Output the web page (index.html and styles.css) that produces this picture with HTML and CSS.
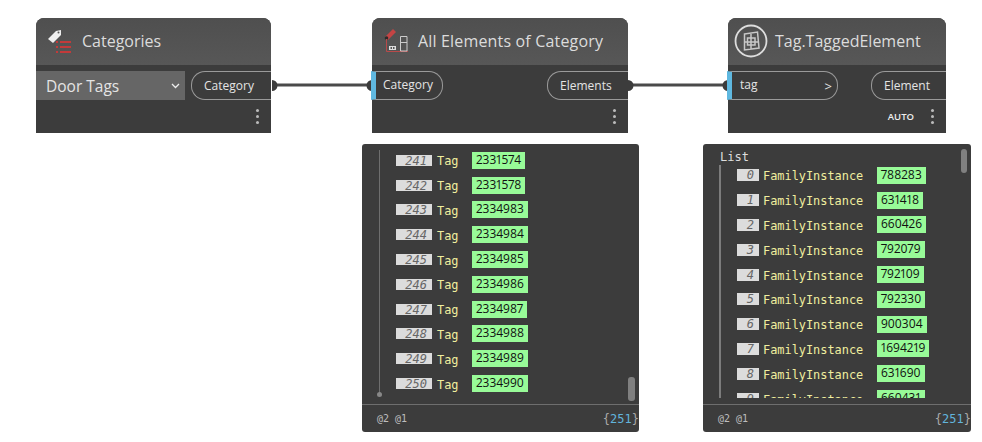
FILE: index.html
```html
<!DOCTYPE html>
<html lang="en">
<head>
    <meta charset="UTF-8">
    <title>Door Tags graph</title>
    <link rel="stylesheet" href="styles.css">
</head>
<body>
    <div class="canvas">
        <svg class="wires" width="982" height="442">
            <path d="M272 85H372M628 85H728" stroke="#4a4a4a" stroke-width="3" fill="none"/>
            <path d="M272 80a5 5 0 0 1 0 11zM372 80a5 5 0 0 0 0 11zM628 80a5 5 0 0 1 0 11zM728 80a5 5 0 0 0 0 11z" fill="#3c3c3c"/>
        </svg>

        <!-- Categories -->
        <div class="node node-categories">
            <div class="node-head">
                <svg class="node-icon" width="32" height="32" viewBox="0 0 32 32">
                    <path d="M2 14 10 6l5-1 0 5-8 8z" fill="#eee"/>
                    <circle cx="12.500" cy="7.500" r="1" fill="#555"/>
                    <path d="M10 16h2v2h-2zM10 21h2v2h-2zM10 26h2v2h-2z" fill="#c33a3a"/>
                    <path d="M14 16h11v2H14zM14 21h11v2H14zM14 26h11v2H14z" fill="#c33a3a"/>
                </svg>
                <span class="node-title">Categories</span>
            </div>
            <div class="node-ports">
                <div class="dropdown">
                    <span>Door Tags</span>
                    <svg width="9" height="6" viewBox="0 0 9 6"><path d="M1 1l3.500 3.500L8 1" stroke="#eee" stroke-width="1.300" fill="none"/></svg>
                </div>
                <div class="port port-out port-cat-out">Category</div>
            </div>
            <div class="node-foot"><span class="dots"></span></div>
        </div>

        <!-- All Elements of Category -->
        <div class="node node-elements">
            <div class="node-head">
                <svg class="node-icon" width="32" height="32" viewBox="0 0 32 32">
                    <path d="M2 12 10 4l3 3-8 8z" fill="#c44444"/>
                    <circle cx="3.500" cy="13" r="1.800" fill="#2c2c2c"/>
                    <path d="M3.500 14V26.500H25" stroke="#b84a4a" stroke-width="1" fill="none"/>
                    <path d="M6 21h7v4H6z" fill="#ddd"/>
                    <path d="M7.500 22h1.500v2H7.500zM10 22h1.500v2H10z" fill="#555"/>
                    <path d="M17.500 11.500h6.500v14.500h-6.500zM17.500 17.500h6.500" stroke="#ccc" stroke-width="1" fill="none"/>
                </svg>
                <span class="node-title">All Elements of Category</span>
            </div>
            <div class="node-ports between">
                <div class="port port-in port-cat-in"><span class="port-raised">Category</span></div>
                <div class="port port-out port-el-out">Elements</div>
            </div>
            <div class="node-foot"><span class="dots"></span></div>
        </div>

        <!-- Tag.TaggedElement -->
        <div class="node node-tagged">
            <div class="node-head">
                <svg class="node-icon" width="34" height="34" viewBox="0 0 34 34">
                    <circle cx="17" cy="17" r="15.500" fill="none" stroke="#ddd" stroke-width="1.800"/>
                    <path d="M10.500 10 23.500 8 25 24l-14.500 2zM10.500 18H24.500M17 9V25M13.500 14H21V21H13.500z" fill="none" stroke="#c8c8c8" stroke-width="1.500"/>
                </svg>
                <span class="node-title">Tag.TaggedElement</span>
            </div>
            <div class="node-ports between">
                <div class="port port-in port-tag-in"><span class="port-raised">tag</span><span class="more">&gt;</span></div>
                <div class="port port-out port-tag-out">Element</div>
            </div>
            <div class="node-foot"><span class="auto">AUTO</span><span class="dots"></span></div>
        </div>

        <!-- preview of All Elements -->
        <div class="preview preview-left">
            <div class="preview-body">
                <div class="tree-line tree-line-left"><i class="tree-end"></i></div>
                <div class="rows">
                    <div class="row"><span class="idx">241</span><span class="type">Tag</span><span class="val">2331574</span></div>
                    <div class="row"><span class="idx">242</span><span class="type">Tag</span><span class="val">2331578</span></div>
                    <div class="row"><span class="idx">243</span><span class="type">Tag</span><span class="val">2334983</span></div>
                    <div class="row"><span class="idx">244</span><span class="type">Tag</span><span class="val">2334984</span></div>
                    <div class="row"><span class="idx">245</span><span class="type">Tag</span><span class="val">2334985</span></div>
                    <div class="row"><span class="idx">246</span><span class="type">Tag</span><span class="val">2334986</span></div>
                    <div class="row"><span class="idx">247</span><span class="type">Tag</span><span class="val">2334987</span></div>
                    <div class="row"><span class="idx">248</span><span class="type">Tag</span><span class="val">2334988</span></div>
                    <div class="row"><span class="idx">249</span><span class="type">Tag</span><span class="val">2334989</span></div>
                    <div class="row"><span class="idx">250</span><span class="type">Tag</span><span class="val">2334990</span></div>
                </div>
                <div class="thumb thumb-bottom"></div>
            </div>
            <div class="preview-foot"><span class="levels">@2 @1</span><span class="count">{<b>251</b>}</span></div>
        </div>

        <!-- preview of Tag.TaggedElement -->
        <div class="preview preview-right">
            <div class="preview-body">
                <div class="list-label">List</div>
                <div class="tree-line tree-line-right"></div>
                <div class="rows">
                    <div class="row"><span class="idx">0</span><span class="type">FamilyInstance</span><span class="val">788283</span></div>
                    <div class="row"><span class="idx">1</span><span class="type">FamilyInstance</span><span class="val">631418</span></div>
                    <div class="row"><span class="idx">2</span><span class="type">FamilyInstance</span><span class="val">660426</span></div>
                    <div class="row"><span class="idx">3</span><span class="type">FamilyInstance</span><span class="val">792079</span></div>
                    <div class="row"><span class="idx">4</span><span class="type">FamilyInstance</span><span class="val">792109</span></div>
                    <div class="row"><span class="idx">5</span><span class="type">FamilyInstance</span><span class="val">792330</span></div>
                    <div class="row"><span class="idx">6</span><span class="type">FamilyInstance</span><span class="val">900304</span></div>
                    <div class="row"><span class="idx">7</span><span class="type">FamilyInstance</span><span class="val">1694219</span></div>
                    <div class="row"><span class="idx">8</span><span class="type">FamilyInstance</span><span class="val">631690</span></div>
                    <div class="row"><span class="idx">9</span><span class="type">FamilyInstance</span><span class="val">660431</span></div>
                </div>
                <div class="thumb thumb-top"></div>
            </div>
            <div class="preview-foot"><span class="levels">@2 @1</span><span class="count">{<b>251</b>}</span></div>
        </div>
    </div>
</body>
</html>
```

FILE: styles.css
```css
body {
    margin: 0;
    background-color: #fff;
    font-family: "Open Sans", "Noto Sans", sans-serif;
    overflow: hidden;
}
.canvas {
    position: relative;
    width: 982px;
    height: 442px;
}
.wires {
    position: absolute;
    left: 0;
    top: 0;
}

/* nodes */
.node {
    position: absolute;
    top: 18px;
    height: 115px;
    background-color: #3c3c3c;
    border-radius: 8px 8px 0 0;
    color: #e4e4e4;
}
.node-categories { left: 36px; width: 235px; }
.node-elements { left: 372px; width: 256px; }
.node-tagged { left: 728px; width: 218px; }
.node-head {
    height: 46px;
    padding-bottom: 1px;
    display: flex;
    align-items: center;
    background: linear-gradient(#4f4f4f, #575757);
    border-radius: 8px 8px 0 0;
}
.node-categories .node-head { padding-left: 10px; }
.node-elements .node-head { padding-left: 11px; }
.node-tagged .node-head { padding-left: 6px; }
.node-icon { flex: none; }
.node-title {
    font-size: 16px;
    color: #dcdcdc;
    white-space: nowrap;
}
.node-categories .node-title { margin-left: 4px; }
.node-elements .node-title { margin-left: 3px; letter-spacing: 0.17px; }
.node-tagged .node-title { margin-left: 7px; }

.node-ports {
    height: 29px;
    margin-top: 6px;
    display: flex;
    align-items: stretch;
}
.between { justify-content: space-between; }
.dropdown {
    width: 149px;
    display: flex;
    align-items: center;
    justify-content: space-between;
    box-sizing: border-box;
    padding: 0 5px 0 10px;
    background-color: #666;
    font-size: 15.500px;
    color: #e4e4e4;
}
.port {
    display: flex;
    align-items: center;
    box-sizing: border-box;
    border: 1px solid #9a9a9a;
    font-size: 12px;
    color: #e4e4e4;
}
.port-raised { margin-top: -2px; }
.port-out {
    border-right: 0;
    border-radius: 14px 0 0 14px;
    padding-left: 12px;
}
.port-in {
    border-left: 5px solid #5fb8e0;
    border-radius: 0 14px 14px 0;
    padding-left: 7px;
}
.port-cat-out { width: 80px; margin-left: 6px; }
.port-cat-in { width: 72px; margin-left: -1px; }
.port-el-out { width: 81px; }
.port-tag-in { width: 111px; margin-left: -1px; justify-content: space-between; padding-left: 8px; padding-right: 5px; }
.port-tag-out { width: 75px; }
.more { font-size: 13px; }
.node-foot {
    height: 33px;
    display: flex;
    align-items: center;
    justify-content: flex-end;
    padding-right: 12px;
}
.auto {
    font-size: 9.500px;
    font-weight: 600;
    color: #eee;
    margin-right: 17px;
}
/* the three dot menu */
.dots {
    width: 3px;
    height: 3px;
    background-color: #bbb;
    border-radius: 50%;
    box-shadow: 0 -6px 0 #bbb, 0 6px 0 #bbb;
}

/* previews */
.preview {
    position: absolute;
    top: 144px;
    height: 288px;
    background-color: #3c3c3c;
    border-radius: 3px;
    display: flex;
    flex-direction: column;
}
.preview-left { left: 362px; width: 277px; }
.preview-right { left: 703px; width: 268px; }
.preview-body {
    position: relative;
    height: 260px;
    overflow: hidden;
}
.preview-foot {
    flex: 1;
    display: flex;
    align-items: center;
    justify-content: space-between;
    border-top: 1px solid #6e6e6e;
    padding-left: 15px;
    font-family: "DejaVu Sans Mono", monospace;
}
.levels {
    font-size: 10px;
    color: #bdbdbd;
}
.count {
    font-size: 12px;
    color: #aaa;
}
.count b {
    font-weight: normal;
    color: #62b4dc;
}
.rows {
    position: absolute;
    top: 4px;
    left: 34px;
}
.preview-right .rows {
    top: 19px;
    height: 235px;
    overflow: hidden;
}
.row {
    height: 24.800px;
    display: flex;
    align-items: center;
    white-space: nowrap;
}
.idx {
    flex: none;
    height: 11px;
    line-height: 13px;
    background-color: #dcdcdc;
    color: #666;
    font-family: "DejaVu Sans Mono", monospace;
    font-size: 12px;
    font-style: italic;
    text-align: right;
    box-sizing: border-box;
    padding-right: 5px;
}
.preview-left .idx { width: 36px; }
.preview-right .idx { width: 22px; height: 12px; }
.type {
    flex: none;
    margin-left: 5px;
    color: #f0ee9f;
    font-family: "DejaVu Sans Mono", monospace;
    font-size: 11.900px;
    margin-top: 2px;
}
.preview-left .type { width: 35px; }
.preview-right .type { width: 114px; margin-left: 4px; }
.val {
    flex: none;
    height: 17px;
    line-height: 16px;
    padding: 0 4px;
    background-color: #98fb98;
    color: #111;
    font-size: 12px;
    font-variant-numeric: proportional-nums;
}
.tree-line {
    position: absolute;
    width: 1px;
    background-color: #6e6e6e;
}
.tree-line-left {
    left: 17px;
    top: 6px;
    height: 245px;
}
.tree-line-right {
    left: 16px;
    top: 21px;
    width: 2px;
    height: 233px;
    background-color: #7c7c7c;
}
.tree-end {
    position: absolute;
    left: -2px;
    bottom: -2px;
    width: 5px;
    height: 5px;
    border-radius: 50%;
    background-color: #888;
}
.list-label {
    position: absolute;
    left: 17px;
    top: 6px;
    color: #ddd;
    font-family: "DejaVu Sans Mono", monospace;
    font-size: 12px;
}
.thumb {
    position: absolute;
    height: 24px;
    background-color: #808080;
    border-radius: 3px;
}
.thumb-bottom { left: 266px; top: 233px; width: 7px; }
.thumb-top { left: 258px; top: 5px; width: 6px; }
```
